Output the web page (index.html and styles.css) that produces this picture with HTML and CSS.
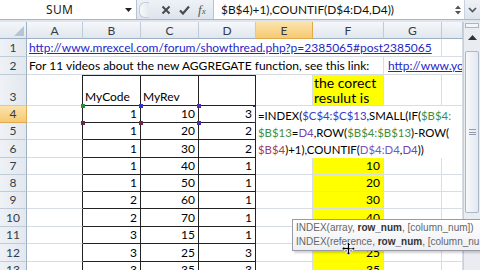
FILE: index.html
```html
<!DOCTYPE html>
<html>
<head>
<meta charset="utf-8">
<link rel="stylesheet" href="styles.css">
</head>
<body>
<div class="app">
  <div class="fbar">
    <div class="namebox">
      <span class="nm">SUM</span>
      <svg class="dd" width="7" height="4" viewBox="0 0 7 4"><path d="M0 0h7L3.5 4z" fill="#222"/></svg>
    </div>
    <div class="grip"><span class="knob"></span></div>
    <div class="fxicons">
      <svg width="10" height="10" viewBox="0 0 10 10"><path d="M1.5 1.5l7 7M8.5 1.5l-7 7" stroke="#4a4a4a" stroke-width="2"/></svg>
      <svg width="11" height="10" viewBox="0 0 11 10"><path d="M1 5.5l3 3L10 1.5" stroke="#4a4a4a" stroke-width="2.2" fill="none"/></svg>
      <span class="fx">f<span class="x">x</span></span>
    </div>
    <div class="finput">$B$4)+1),COUNTIF(D$4:D4,D4))</div>
    <div class="spin">
      <svg width="8" height="12" viewBox="0 0 8 12"><path d="M1 5L4 1.5 7 5zM1 7l3 3.5L7 7z" fill="#555"/></svg>
    </div>
    <div class="expand">
      <svg width="9" height="6" viewBox="0 0 9 6"><path d="M1 1l3.5 3.5L8 1" stroke="#555" stroke-width="1.6" fill="none"/></svg>
    </div>
  </div>

  <div class="sheet">
    <div class="grid">
      <div class="corner"><span class="tri"></span></div>
      <div class="ch">A</div><div class="ch">B</div><div class="ch">C</div><div class="ch">D</div>
      <div class="ch act">E</div><div class="ch">F</div><div class="ch">G</div><div class="ch"></div>

      <div class="rh">1</div>
      <div class="c span7"><span class="link">http://www.mrexcel.com/forum/showthread.php?p=2385065#post2385065</span></div>
      <div class="c"></div>

      <div class="rh">2</div>
      <div class="c span6">For 11 videos about the new AGGREGATE function, see this link:</div>
      <div class="c span2 clip"><span class="link">http://www.youtube.com/watch?v=</span></div>

      <div class="rh">3</div>
      <div class="c tl"></div>
      <div class="c t top">MyCode</div>
      <div class="c t top">MyRev</div>
      <div class="c t top"></div>
      <div class="c"></div>
      <div class="c y wrap">the corect resulut is</div>
      <div class="c"></div><div class="c"></div>

      <div class="rh act">4</div>
      <div class="c tl"></div><div class="c t n">1</div><div class="c t n">10</div><div class="c t n">3</div>
      <div class="c"></div><div class="c y"></div><div class="c"></div><div class="c"></div>

      <div class="rh">5</div>
      <div class="c tl"></div><div class="c t n">1</div><div class="c t n">20</div><div class="c t n">2</div>
      <div class="c"></div><div class="c y"></div><div class="c"></div><div class="c"></div>

      <div class="rh">6</div>
      <div class="c tl"></div><div class="c t n">1</div><div class="c t n">30</div><div class="c t n">2</div>
      <div class="c"></div><div class="c y"></div><div class="c"></div><div class="c"></div>

      <div class="rh">7</div>
      <div class="c tl"></div><div class="c t n">1</div><div class="c t n">40</div><div class="c t n">1</div>
      <div class="c"></div><div class="c y n">10</div><div class="c"></div><div class="c"></div>

      <div class="rh">8</div>
      <div class="c tl"></div><div class="c t n">1</div><div class="c t n">50</div><div class="c t n">1</div>
      <div class="c"></div><div class="c y n">20</div><div class="c"></div><div class="c"></div>

      <div class="rh">9</div>
      <div class="c tl"></div><div class="c t n">2</div><div class="c t n">60</div><div class="c t n">1</div>
      <div class="c"></div><div class="c y n">30</div><div class="c"></div><div class="c"></div>

      <div class="rh">10</div>
      <div class="c tl"></div><div class="c t n">2</div><div class="c t n">70</div><div class="c t n">1</div>
      <div class="c"></div><div class="c y n">40</div><div class="c"></div><div class="c"></div>

      <div class="rh">11</div>
      <div class="c tl"></div><div class="c t n">3</div><div class="c t n">15</div><div class="c t n">1</div>
      <div class="c"></div><div class="c y n">15</div><div class="c"></div><div class="c"></div>

      <div class="rh">12</div>
      <div class="c tl"></div><div class="c t n">3</div><div class="c t n">25</div><div class="c t n">3</div>
      <div class="c"></div><div class="c y n">25</div><div class="c"></div><div class="c"></div>

      <div class="rh">13</div>
      <div class="c tl"></div><div class="c t n">3</div><div class="c t n">35</div><div class="c t n">3</div>
      <div class="c"></div><div class="c y n">35</div><div class="c"></div><div class="c"></div>
    </div>

    <div class="vscroll">
      <div class="split"></div>
      <div class="sbtn"><svg width="9" height="5" viewBox="0 0 9 5"><path d="M0 5L4.5 0 9 5z" fill="#333"/></svg></div>
      <div class="thumb"><span class="grips"></span></div>
    </div>

    <span class="h h-green" style="left:81px;top:82px"></span>
    <span class="h h-blue" style="left:139px;top:82px"></span>
    <span class="h h-maroon" style="left:81px;top:99px"></span>
    <span class="h h-maroon" style="left:139px;top:99px"></span>
    <span class="h h-purple" style="left:197px;top:82px"></span>
    <span class="h h-purple" style="left:197px;top:99px"></span>
    <span class="dbracket"></span>

    <div class="editbox">
      <div>=INDEX(<span class="r1">$C$4:$C$13</span>,SMALL(IF(<span class="r2">$B$4:</span></div>
      <div><span class="r2">$B$13</span>=<span class="r3">D4</span>,ROW(<span class="r2">$B$4:$B$13</span>)-ROW(</div>
      <div><span class="r4">$B$4</span>)+1),COUNTIF(<span class="r5">D$4:D4</span>,<span class="r3">D4</span>))</div>
    </div>

    <div class="tip">
      <div class="tl1">INDEX(array, <b>row_num</b>, [column_num])</div>
      <div class="tl2">INDEX(reference, <b>row_num</b>, [column_num], [area_num])</div>
    </div>

    <svg class="cursor" width="13" height="13" viewBox="0 0 13 13">
      <path d="M6.5 0.5L9 3H7.5v3h3V4.5L13 6.5 10.5 9V7.5h-3v3H9L6.5 13 4 10.5h1.5v-3h-3V9L0 6.5 2.5 4v1.5h3v-3H4z" fill="#000" stroke="#fff" stroke-width="0.8"/>
    </svg>
  </div>
</div>
</body>
</html>
```

FILE: styles.css
```css
* { box-sizing: border-box; }

html, body {
  margin: 0;
  padding: 0;
  width: 480px;
  height: 270px;
  overflow: hidden;
  background: #fff;
}

.app {
  width: 480px;
  height: 270px;
  overflow: hidden;
  font-family: Lato, "Liberation Sans", sans-serif;
  background: #dfe5ed;
}

/* formula bar */
.fbar {
  display: flex;
  height: 20px;
  margin-bottom: 2px;
  background: linear-gradient(#eef2f7, #dde4ed);
  border-bottom: 1px solid #a8b6c8;
}

.namebox {
  width: 137px;
  display: flex;
  align-items: center;
  background: #fff;
  border-right: 1px solid #b8c4d3;
  padding-left: 46px;
  padding-right: 4px;
}

.nm {
  flex: 1;
  font-family: "Noto Sans", sans-serif;
  font-size: 12px;
  color: #222;
  letter-spacing: 0.3px;
}

.dd { margin-top: 1px; }

.grip {
  width: 14px;
  display: flex;
  align-items: center;
  justify-content: center;
}

.knob {
  width: 10px;
  height: 16px;
  border-radius: 6px 0 0 6px;
  border: 1px solid #c3ccd8;
  border-right: none;
  background: linear-gradient(90deg, #f7f9fb, #e4e9f0);
}

.fxicons {
  width: 63px;
  display: flex;
  align-items: center;
  gap: 8px;
  padding-left: 10px;
  border-right: 1px solid #b8c4d3;
}

.fx {
  font-family: "Liberation Serif", serif;
  font-style: italic;
  font-size: 13px;
  color: #555;
  line-height: 1;
}

.fx .x { font-size: 9px; }

.finput {
  flex: 1;
  background: #fff;
  font-size: 11.9px;
  color: #111;
  padding-left: 7px;
  line-height: 20px;
  white-space: nowrap;
}

.spin {
  width: 12px;
  background: #fff;
  display: flex;
  align-items: center;
  justify-content: center;
}

.expand {
  width: 16px;
  display: flex;
  align-items: center;
  justify-content: center;
  border-left: 1px solid #c8d1dc;
}

/* sheet */
.sheet {
  position: relative;
  display: flex;
  height: 248px;
}

.grid {
  display: grid;
  grid-template-columns: 27px 56px 58px 58px 57px 57px 71px 58px 21px;
  grid-template-rows: 17px 18px 18px 31px 17px 17px 18px 17px 17px 17px 18px 17px 18px 17px;
  background: #fff;
  font-size: 12px;
  color: #000;
}

.corner {
  background: linear-gradient(#f3f6f9, #e2e8ef);
  border-right: 1px solid #9eb0c6;
  border-bottom: 1px solid #9eb0c6;
  position: relative;
}

.tri {
  position: absolute;
  right: 2px;
  bottom: 2px;
  width: 0;
  height: 0;
  border-left: 10px solid transparent;
  border-bottom: 10px solid #b9c4d2;
}

.ch {
  background: linear-gradient(#f5f7fa, #e1e7ee);
  border-right: 1px solid #c0cbd8;
  border-bottom: 1px solid #9eb0c6;
  display: flex;
  align-items: center;
  justify-content: center;
  font-size: 12px;
  color: #333c48;
}

.rh {
  background: linear-gradient(90deg, #eef2f6, #e3e8ef);
  border-right: 1px solid #9eb0c6;
  border-bottom: 1px solid #c0cbd8;
  display: flex;
  align-items: flex-end;
  justify-content: center;
  padding-bottom: 1px;
  font-size: 12px;
  color: #333c48;
}

.ch.act, .rh.act {
  background: linear-gradient(#fbe3ac, #f6c971);
  border-color: #e0a94e;
}

.c {
  border-right: 1px solid #d8dde4;
  border-bottom: 1px solid #d8dde4;
  white-space: nowrap;
  padding: 0 2px;
  display: flex;
  align-items: flex-end;
  padding-bottom: 1px;
  line-height: 15px;
}

.span7 { grid-column: span 7; }
.span6 { grid-column: span 6; }
.span2 { grid-column: span 2; }
.clip { overflow: hidden; padding-left: 4px; }

.link {
  color: #2626c8;
  text-decoration: underline;
}

.t { border-color: #222; }
.tl { border-right-color: #222; }
.top { box-shadow: inset 0 1px 0 #222; }
.n { justify-content: flex-end; padding-right: 3px; }

.y { background: #ffff00; }

.wrap {
  white-space: normal;
  align-items: center;
  font-size: 14px;
  line-height: 15px;
  padding: 0 1px;
}

/* scrollbar */
.vscroll {
  width: 17px;
  background: #e9edf2;
  border-left: 1px solid #c6d0dc;
  display: flex;
  flex-direction: column;
  align-items: center;
}

.split {
  width: 14px;
  height: 5px;
  margin-top: 1px;
  border: 1px solid #a9b6c6;
  background: #f3f6f9;
}

.sbtn {
  width: 15px;
  height: 15px;
  margin-top: 2px;
  display: flex;
  align-items: center;
  justify-content: center;
}

.thumb {
  width: 14px;
  height: 162px;
  margin-top: 6px;
  border: 1px solid #aab7c8;
  border-radius: 2px;
  background: linear-gradient(90deg, #f6f8fb, #e4e9f0);
  display: flex;
  align-items: center;
  justify-content: center;
}

.grips {
  width: 7px;
  height: 6px;
  border-top: 1px solid #8f9cae;
  border-bottom: 1px solid #8f9cae;
  background: linear-gradient(#8f9cae, #8f9cae) center / 7px 1px no-repeat;
}

/* reference handles */
.h {
  position: absolute;
  width: 4px;
  height: 4px;
}
.h-green { background: #2d8a3a; }
.h-blue { background: #2f34c6; }
.h-maroon { background: #6b2a4a; }
.h-purple { background: #4b2fa8; }

.dbracket {
  position: absolute;
  left: 253px;
  top: 84px;
  width: 3px;
  height: 17px;
  border: 1px solid #3a2a6a;
  border-left: none;
}

/* in-cell edit */
.editbox {
  position: absolute;
  left: 256px;
  top: 84px;
  width: 206px;
  height: 52px;
  background: #fff;
  padding-left: 2px;
  padding-top: 1px;
  font-size: 11.4px;
  line-height: 17.2px;
  white-space: nowrap;
  overflow: hidden;
  color: #000;
}

.r1 { color: #3b3bc4; }
.r2 { color: #3f8f3f; }
.r3 { color: #7a3fb0; }
.r4 { color: #9a3f6a; }
.r5 { color: #7a55c0; }

/* tooltip */
.tip {
  position: absolute;
  left: 292px;
  top: 197px;
  width: 230px;
  height: 32px;
  background: linear-gradient(#ffffff, #eef0f4);
  border: 1px solid #9a9aa8;
  box-shadow: 2px 2px 2px rgba(0,0,0,0.18);
  font-family: "Liberation Sans", sans-serif;
  font-size: 10px;
  color: #666;
  padding: 1px 0 0 3px;
  line-height: 14px;
  white-space: nowrap;
}

.tip b { color: #333; }

.cursor {
  position: absolute;
  left: 342px;
  top: 220px;
}
```
